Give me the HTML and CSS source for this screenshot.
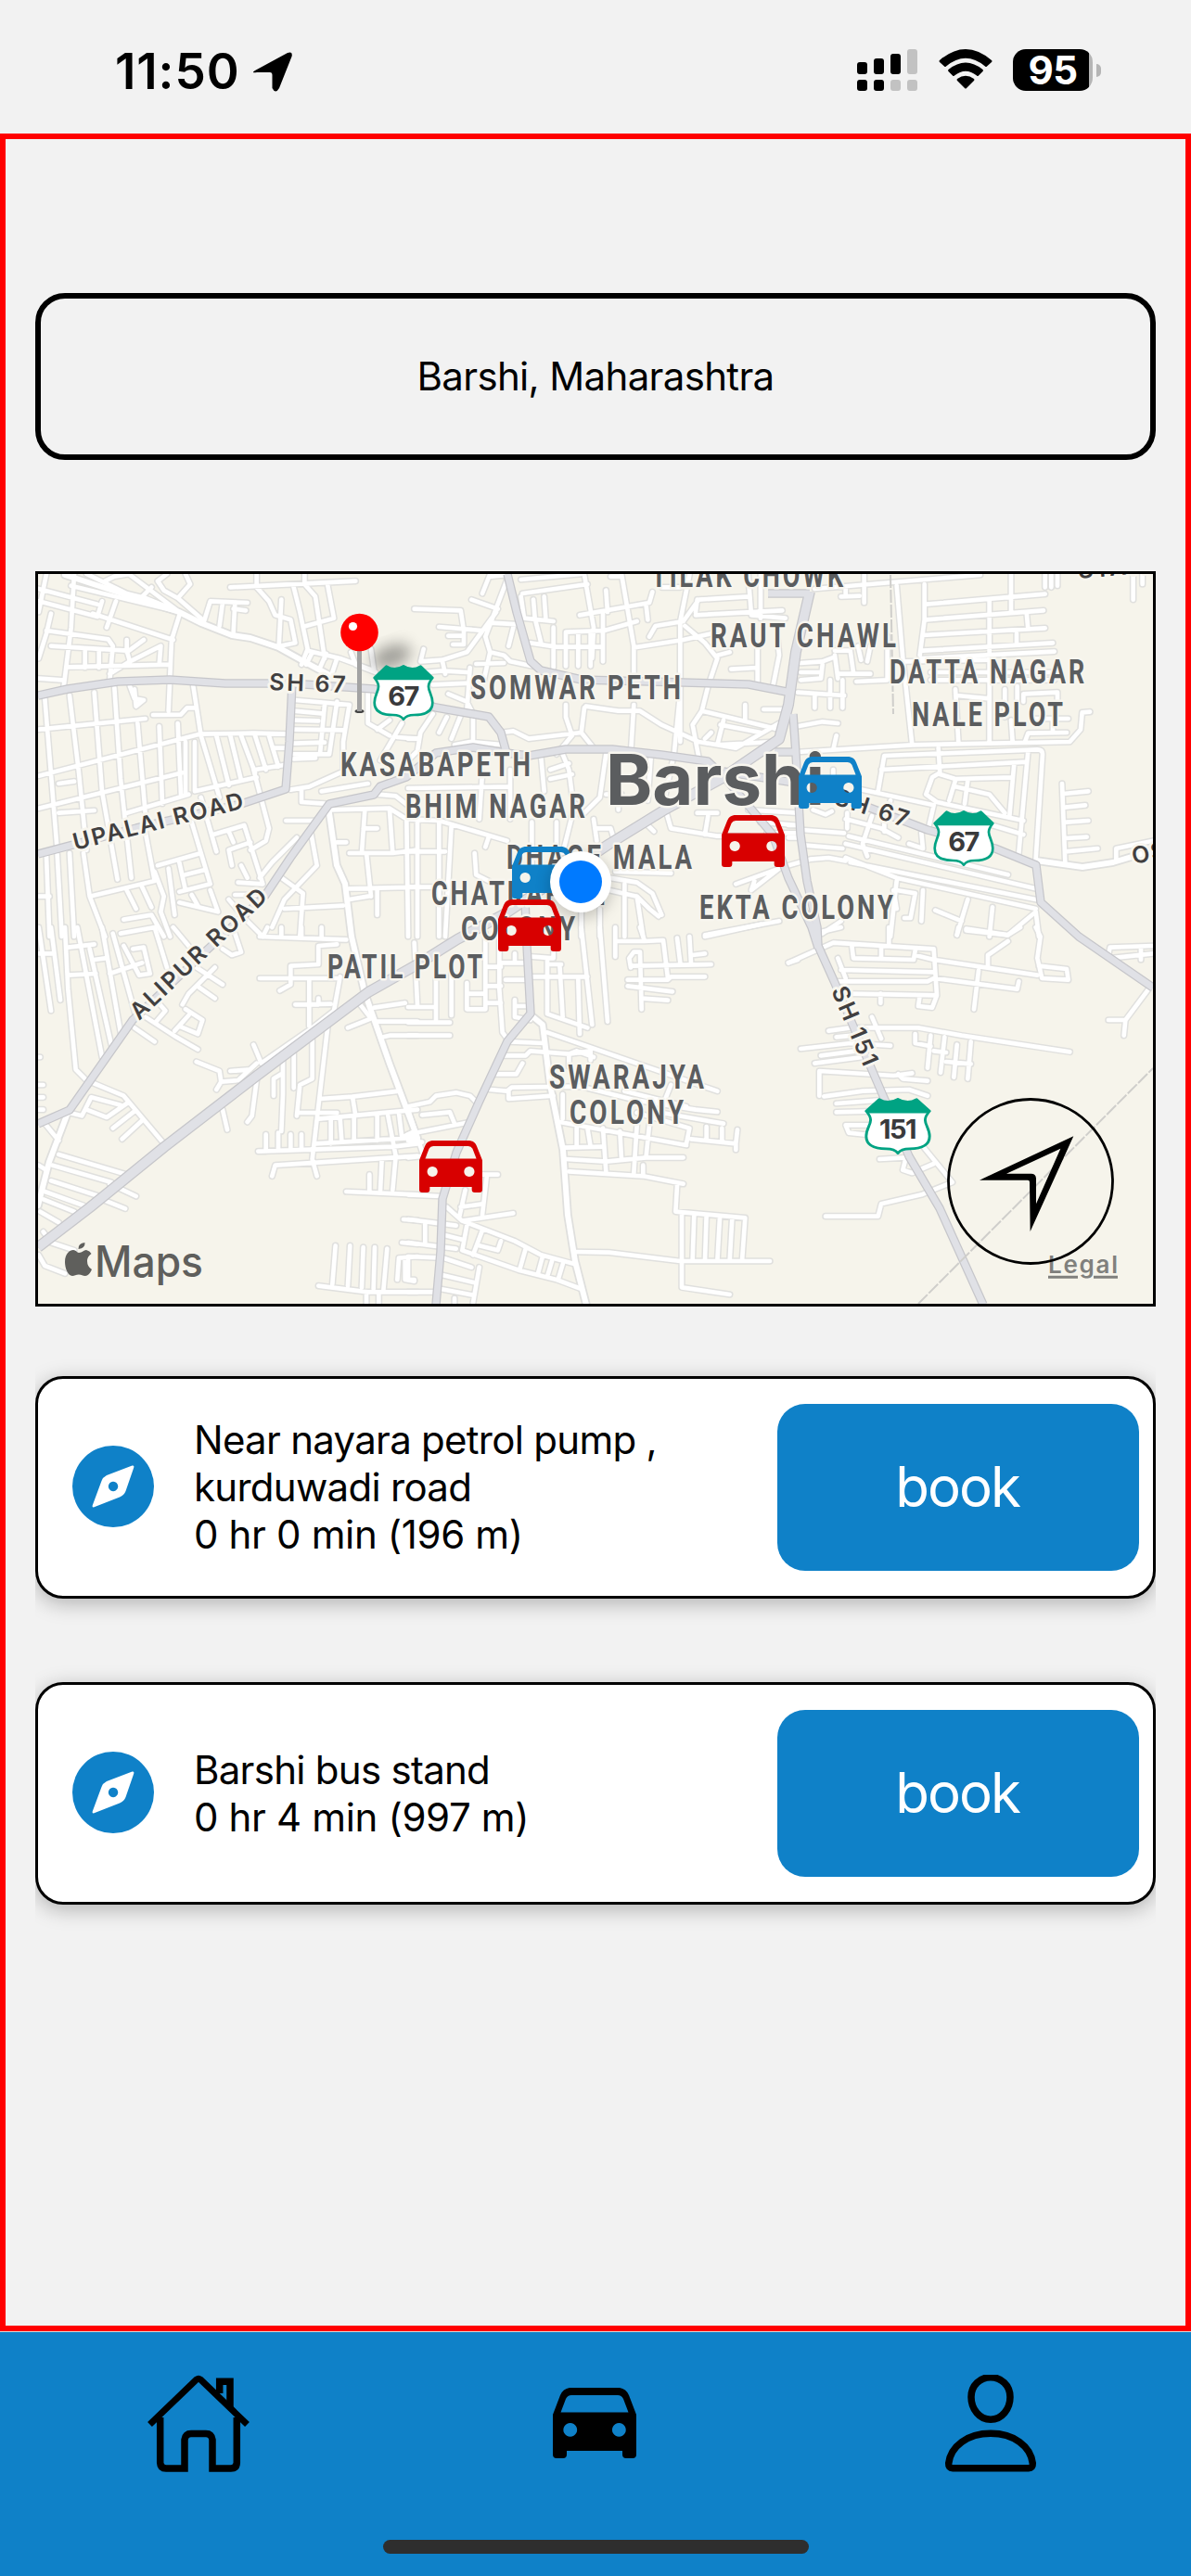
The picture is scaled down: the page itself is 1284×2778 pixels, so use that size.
FILE: index.html
```html
<!DOCTYPE html>
<html lang="en">
<head>
<meta charset="utf-8">
<title>Book a ride</title>
<link rel="stylesheet" href="styles.css">
</head>
<body>
<svg class="defs" width="0" height="0" aria-hidden="true">
  <defs>
    <symbol id="car" viewBox="0 0 90 76" preserveAspectRatio="none">
      <path fill-rule="evenodd" d="M18 0H72Q79 1 82 8L90 29V72Q90 76 86 76H79Q75 76 75 72V68H15V72Q15 76 11 76H4Q0 76 0 72V29L8 8Q11 1 18 0ZM20 8Q16 8 14 12L8.500 26.500H81.500L76 12Q74 8 70 8ZM18.700 38a7.400 7.400 0 1 0 .1 0ZM71.300 38a7.400 7.400 0 1 0 .1 0Z"/>
    </symbol>
    <symbol id="compass" viewBox="0 0 88 88">
      <circle cx="44" cy="44" r="44" fill="#0f81c8"/>
      <path fill="#fff" fill-rule="evenodd" d="M64.500 21.500Q67 21 66.300 23.500L57.500 49Q56 53 51 55.500L23.500 66.300Q21 67 21.700 64.500L31.500 38Q33 34 37 32ZM44 38.800a5.200 5.200 0 1 0 .1 0Z"/>
    </symbol>
    <symbol id="shield" viewBox="0 0 196 180" preserveAspectRatio="none">
      <path class="shield-body" d="M5 42L43 5Q70 22 98 4Q126 22 153 5L191 42Q178 58 178 70C178 86 191 100 191 122C191 150 168 162 132 162Q108 162 98 176Q88 162 64 162C28 162 5 150 5 122C5 100 18 86 18 70Q18 58 5 42Z"/>
      <path class="shield-top" d="M5 42L43 5Q70 22 98 4Q126 22 153 5L191 42L183 49H13Z"/>
    </symbol>

    <g id="streets">
      <path transform="translate(30 600) scale(.33333)" d="M60 57L35 180M150 57L140 230L115 430M35 105L225 155M35 145L225 195L240 145M140 95L470 175M285 145L255 230M210 185L470 270M190 57L320 120L380 135L480 175M250 80L280 65L330 57M330 60L490 180M370 130L400 100M450 57L420 80L440 110L485 135L525 90L510 57M485 135L560 200M490 190L465 270L455 500M75 185L60 250L35 330M60 240L260 268L275 290L265 400M75 290L320 305L330 340L265 380M320 270V310L375 270M330 340L430 290L425 350M130 358L460 350M185 300V360M230 305V360M35 395L110 400M655 100L1060 80M740 57V100L780 145L800 190L850 205L865 280L815 290M820 140L812 290M895 57V90L930 130L960 330M860 100L880 180L905 300L885 350M970 95L990 200L900 225M570 210L590 145L710 150M630 150L620 225M670 150L665 245M665 170L705 175M905 305L1010 330L1120 370M920 310L900 350M965 315L945 360M1000 330L985 375M1045 310L1060 350L1125 375M1110 300L1120 370
      M55 460L95 950M135 450L165 700L190 950M215 440L240 760L290 1045M280 425L300 720L335 1040M35 560L380 525M35 710L555 575L730 572L840 575M35 815L500 700M100 830L215 822M100 735L150 728M320 830L520 770M355 540L380 830M425 550L435 800M485 540L495 770M330 420L345 460L375 465L350 485L345 430M405 513L495 512L515 490L545 490M535 420L560 580L620 780M540 600V760L740 715M510 600V770M610 580L650 740M655 580L690 725M690 580L735 700M735 580L770 690M780 580L810 680M735 690L830 675M800 620L835 620M730 690L780 880L770 920L720 950M865 465L1040 480L1020 600V690M860 500L950 508M860 530L940 532M860 560L1020 562M860 605L960 602M860 640L975 640L1000 470M960 480L945 640M860 655L930 652M1100 440V540L1170 580M1195 585L1260 590M1130 560L1170 530M1210 540L1140 660M850 755L910 745L1010 700M885 750V795L960 800M950 760L1100 735M835 855L925 855M870 910L790 990L750 1040M915 890L935 1000L830 1110L790 1200M820 1040L890 1090L880 1230M980 820L1170 815L1225 850L1230 1230M1090 820L1080 960M1000 925H1030M1085 880H1130M1170 820L1180 960L1040 960M1040 1075L1260 1070M1095 960L1110 1100M1180 960L1260 950M1130 1080V1160M1130 770L1190 775L1260 830M830 1140L1020 1130M1100 1100L1040 1110
      M60 970L70 1230M95 965L110 1230M135 960L150 1230M180 960L200 1100L250 1230M200 1100L410 1050L380 890M410 1020L440 1100L430 1150L460 1230M420 1000L560 960L590 1060L490 1085M490 990L510 1080M510 1030L570 1015M530 860L560 960M560 780L610 955M600 900L700 870L760 1060L680 1055M650 890L665 925M720 925L650 950L660 1000M690 1000L710 1040M320 1080L350 1140M370 1070L400 1135M455 1010L475 1160M530 1095L550 1130M590 1080L615 1150L490 1120M310 1175L400 1160L440 1230M670 1095L740 1095M35 1100H70M650 1110L700 1170L760 1230"/>
      <path transform="translate(30 1000) scale(.33333)" d="M35 0L75 270M75 0L105 235M120 0L130 200L155 460L190 495L310 545L440 700M160 0L240 420M200 70L270 380M240 0L300 340M275 20L350 290M35 85H85M130 65L215 55M130 155L220 150M215 105L250 100M265 150L370 115M300 20L410 0M340 70L375 65L395 150L360 155L310 60M410 0L450 130M470 0L520 60M630 70L660 90L690 80L670 20M545 130L630 185M605 130L520 215L500 250M555 195L605 230M510 265L565 300L550 345L490 320M475 335L520 285M380 290L480 355L550 395M345 325L410 370M410 230L445 270L415 305M545 435L620 465L625 500L610 525M625 500L680 495L740 440M655 465L720 460M730 380L755 440L920 325L990 270L1010 160M630 590L645 655M740 495L725 610L710 630M825 425V540L820 660M795 545V490L820 475M860 410V520M920 365V490L880 510L870 610M970 320L920 750L935 805M750 165H1000M815 205L850 185V125L940 120V60L1000 55M910 170V320M865 250L980 248M940 230V250M750 30L1030 40M775 0L760 30M820 0V30M885 0V30M950 0V30M1035 325L1110 295L1075 250M1120 260L1220 245M1130 305H1260M1150 355L1170 350H1260M945 555L1050 548L1200 530M1050 548L1060 610M880 600H1000M940 620L1260 590M930 700L1260 680M745 725L1180 710L1260 700M790 805L800 770L1260 740M770 670V725M810 665V720M850 670V720M885 670V715M980 620V700M1010 620L1015 690M1055 610V690M1130 610V690M1165 610L1190 740L1180 850M1200 600L1210 680L1250 660M1145 750L1140 850M1105 800V855M1030 855L1260 865M1215 945L1260 948M1210 1020L1260 1025M995 1030L985 1155M1042 1030L1035 1160M1085 1035L1080 1165M1122 1035L1118 1170M1162 1040L1150 1175M940 1160L1100 1180H1260M1095 1180V1220M1135 1180V1220M1195 1140L1200 1070L1260 1065M1220 1070V1140L1250 1145
      M55 635L100 690M135 600L175 610L205 550L300 575M190 590L255 615L320 570M345 595L275 650M370 625L305 685M100 735L320 800M80 770L270 825M75 820L230 870M55 855L180 900M50 880L150 920M40 920L100 955M265 830L350 870M240 880L315 910M50 985L75 1020L150 1045M35 1060L55 1095L120 1120M35 420H40M35 510H50M35 550H50M35 590H50M35 770L60 785"/>
      <path transform="translate(440 600) scale(.33333)" d="M20 170L170 175L180 240M265 57L240 120M270 65L320 60M320 75L250 260L265 310L245 400M205 140L290 170M100 228L240 240M130 257H175M145 285H180V240M265 215L360 220M340 230L325 290M285 180L190 310L110 335L40 340L50 300M110 335L120 380M265 310L310 320L330 340L400 355M220 348L310 345M365 75L560 57M370 120L580 90M365 130L375 200L470 210M405 140L410 200L430 280M440 130L445 200M570 60L600 230L595 330M395 280L480 293H630M470 230V360M510 355V245L635 240L740 210M550 245V355M590 245V355M630 180V340M555 190L780 150L790 115M640 110L645 180M655 65H690V57L730 290V400M770 160L775 205M730 295L890 270L980 250M780 260L800 225L890 210M910 60L880 210V600M890 210L940 140L1100 130M930 190L1210 175M1100 60L1110 190L1220 200M1140 60V200M820 100H880M895 225L960 280L1000 330L970 420L950 500L920 545L940 650M1000 320L1040 310M1045 365L1130 360M1130 300V420M1195 270L1200 320L1180 420M935 140L930 180
      M510 480V520L530 580L480 640M570 490L560 570L600 620M575 485L680 500H750L820 545L940 600M300 570L340 565L390 590L560 570M730 480L720 640M880 440L860 640L830 780M950 500L1200 560M1090 480V530M1150 495H1230M1020 530L1000 610L1180 600M1010 545L1140 570M940 600L1060 620L1200 540M960 590L980 570M0 380L110 370L190 375M80 415L200 410M130 445L190 470L210 510V610M170 515L140 590M125 520L100 570M150 610L200 600L310 610M80 510L40 570L30 630L0 660M0 590H30M200 360L190 500M430 650L440 760M500 640L520 690L530 770M460 690L520 670M460 720L530 705M330 690V850M240 700L230 850M0 750L330 745M640 640L620 780L560 840M640 770H690M785 650L775 790M680 800V820M540 800L500 960M400 860V1000M0 850L100 855L320 920M30 860V1230M100 860V1230M140 870L120 1230M0 955H120M0 1070H130M260 910L250 940M215 960L220 1030L260 1050M480 860V930M600 850L610 920M655 880L670 930M610 880H655M830 810L850 880L1000 905H1100M775 870L795 890M970 840L960 900M935 830H1000M1100 820L1260 830M1140 860L1260 870M1160 895H1260M650 1040L740 1055L790 1090L820 1160M670 1020L850 1025M650 1080L740 1100L760 1230M700 1060V1230M560 1150V1230M620 1140V1230M960 1225L1200 1180M1060 1060L1200 1010L1110 1080L1120 1050M740 1100L780 1140L810 1165"/>
      <path transform="translate(850 600) scale(.33333)" d="M85 105L620 60M245 60V150M170 130L230 128M185 100V130M350 95L370 330L400 610M440 90V205L425 320M445 155L830 122M445 205L825 175M435 255L830 232M435 305L855 280M430 330L860 308M720 57V180M650 140V600M770 180L775 235M738 250V285M830 57V100M850 57V100M870 57V95M1115 57V140M1145 57V90M150 320L160 395M40 345L110 340L150 325M40 375H105M40 400L105 395L110 350M150 305H200L210 375M160 380H265M225 290L235 335M265 290L255 340M320 260V400L220 405M30 440L180 450M85 450V490M135 400V490M175 400V490M30 550L110 535L160 540M155 580L145 625M30 633L400 610L910 600L945 560L950 505L975 503M540 430L550 605M545 450L650 460M700 430V520M740 420V470M760 470V445L870 440V470M720 530L725 600M790 525H905M765 600L775 572L900 570M855 530V570M380 340L640 335M460 375H860M460 400H860
      M290 760L310 645L805 625Q822 625 822 640L800 980M300 690L770 665M485 620L490 700M775 630L745 960M730 670L715 840M490 700L465 715L445 770L480 795L760 855M490 705L540 720L720 715M540 725L520 790M580 725L570 800M540 745L650 770L700 830M240 755L470 805L455 870M330 790L320 830M145 690V770M885 735L895 990M890 768L970 760M895 812L960 805M900 860L970 855M895 912L965 908M895 955L1000 945M1060 985V945L1180 920M45 885L180 895M0 870H30M0 910H30M55 935L175 945M190 830V880M185 850L300 880L355 910M270 840L240 930L255 970M195 905L710 1030M430 895L435 945L390 930M310 850V890M185 930L800 1075M185 975L350 1040L800 1140M200 990L800 1110M0 1000L70 980L130 975L185 985M660 870L760 900M80 820L120 835L140 825M350 1050L330 1230M350 1080L410 1090L395 1170H375M435 1080L430 1180M580 1110L545 1225M475 1145L560 1180M660 1135L650 1230M575 1210L710 1225L800 1150L810 1230M170 1180L110 1220M340 1080L350 1140"/>
      <path transform="translate(440 1000) scale(.33333)" d="M20 50L30 250M0 258H85M90 170V300M140 150V285M0 308H135M0 350H135M190 180V265H250V20M195 215H250M250 245H300M250 128H300M255 190H300M295 0V200L305 340L320 360M345 85V115M300 115H380M315 170H380M345 235V290L395 300M350 255H390M400 160H580M400 95L470 100V80M450 100V280L580 325M490 120L500 290M450 120H495M550 170L555 345M560 0L595 315M620 0L645 305M450 340L1000 530M330 370L440 375M310 415H380L395 400L520 410L590 400V430M280 475H350L370 440M265 525L320 530L335 518L560 515M325 530V555L470 545M520 450V410L545 400L600 420M0 580L70 565L90 545L155 535L200 545L225 570M45 607L135 598L150 635M0 670L190 632M0 590L50 740M0 690L45 695M0 745L50 740M500 540V620M490 630L900 705M560 515L740 560L930 590L1000 597M700 530L900 580M820 600L1020 635M740 600L910 650L900 700M545 640V710M580 650L590 710M630 650L640 790M685 660L690 750M740 640L730 795M780 640L770 740M505 713L625 710M510 750L640 758L770 745H890M520 790L760 805L890 830M870 835L865 920L1090 940L1080 1080M965 645V690M1015 650V690M915 685L1060 700L1065 655M1060 700V720M850 510L830 560M760 770V805M540 1050L650 1052L880 1080H1170M885 930V1165L1040 1188M925 930L920 1075M965 930L960 1078M1008 940L1000 1080M1048 940L1040 1080
      M670 0V95M750 0L765 45L825 42L840 165M670 45H760M720 130L715 100L730 80H750L755 265M720 125L980 120M870 35L880 115M910 30L915 115M920 90L960 85M710 170H840L850 160H960M710 190L855 208M755 230L840 236M960 30L1140 -10M1230 115L1260 105M240 800H290M255 800L240 930M185 850L165 940M170 905L240 895M175 950L340 925M125 905L175 950L345 1015L430 1060L540 1090M190 965L175 1045L360 1110L480 1140L560 1170M240 980L210 1060M300 1015L290 1045L230 1030M380 1040L360 1110M435 1065L420 1120M465 1080L450 1130M500 1090L485 1140M0 865L105 870M0 945L155 965M55 960V1020M0 1020L155 1040M0 1065L115 1070L205 1100M115 995L175 1010M110 1125L215 1150M105 1170L210 1190M230 1100L210 1215M0 1180H85M0 1140H20M0 1065V1140M150 1200V1215"/>
      <path transform="translate(850 1000) scale(.33333)" d="M0 115L145 50L470 70L480 220L465 260L420 255L425 220M205 60L210 100L405 105L410 75M300 60V100M325 0V55M410 90L470 105L805 155M160 100L185 165M170 138L470 145M160 175H450L470 165L740 200L745 175M200 215L480 220M298 215V245M600 265L615 140M645 130V90L710 45M545 25L550 0M575 5L710 25L750 0M800 0L815 30L805 100L820 165L905 170L900 135L810 125M1035 90L1040 65L1180 60M1040 100L1180 85M1140 70V105M1165 200L1090 300H1035M1090 300L1085 350M105 15L170 0M130 335L200 325H420L560 350L910 403M155 355L210 350M40 393L200 375L330 383M270 290L300 360M105 415L220 400M85 440L240 420M100 545V465L340 480L400 472M355 475L370 490L450 497M115 547L240 530L390 525L450 545M155 570L290 560M155 598L280 595M260 640L185 640L195 665L260 672M410 345V375L460 385M460 350L450 455M505 355L492 470M545 380L535 485M590 370L580 490M470 400L510 405M510 435L590 442M295 750L380 745L370 785L400 795L470 765M440 715L530 825L430 865L300 895L290 935H120"/>
    </g>
    <g id="avenues">
      <path d="M70 620L193 660L217 672L250 685L270 688L300 698L327 713L355 728"/>
      <path d="M354 870L363 933L372 953L379 1010L393 1070L420 1147L450 1227"/>
      <path d="M73 1200L53 1253L41 1300"/>
      <path d="M575 1097L585 1105L593 1170L607 1240L612 1310L620 1360L632 1407"/>
      <path d="M1117 928L1167 935L1200 930L1243 917"/>
    </g>
    <g id="highways">
      <path d="M41 750L73 743L127 735L183 733L243 737H313L403 743L470 763L510 770L527 773L540 790L546 812"/>
      <path d="M285 967L313 925L355 867L403 857L410 848L438 838L470 812L510 806L546 812L570 815L610 808H660L713 814L763 821L780 837"/>
      <path d="M41 921L147 893L260 867L308 851L312 800L315 737"/>
      <path d="M285 967L215 1032L143 1100L75 1197L41 1212"/>
      <path d="M780 837L833 900L850 947L875 1000L882 1022"/>
      <path d="M547 619L557 660L572 713L583 723L627 733L807 738L853 747"/>
      <path d="M828 640H873M835 811H858"/>
      <path d="M780 832L850 843L927 867L1000 895L1073 915L1117 933L1122 973L1163 1010L1243 1065"/>
      <path d="M566 970L568 1020L572 1093L547 1123L517 1187L492 1243L477 1293L475 1350L470 1407"/>
      <path d="M855 770L858 813L863 900L870 950L881 1000L882 1020L900 1060L950 1177L980 1247L1013 1303L1060 1407"/>
    </g>
    <path id="trunk" d="M41 1345L97 1302L177 1237L277 1160L397 1070L450 1040L493 1013L545 985L657 910L717 873L777 840L840 797L850 760L858 703L873 638"/>
    <filter id="soft" x="-50%" y="-50%" width="200%" height="200%"><feGaussianBlur stdDeviation="8"/></filter>
  </defs>
</svg>

<div class="screen">
  <header class="status">
    <div class="status-left">
      <span class="clock">11:50</span>
      <svg class="location" viewBox="0 0 42 43"><path d="M2 20L37 1Q43-1 41.500 5L28 39Q24 46 20.500 39V25Q20.500 22 18 22H4Q-3 23 2 20Z"/></svg>
    </div>
    <div class="status-right">
      <svg class="signal" viewBox="0 0 66 45">
        <rect x="0" y="14" width="11" height="13" rx="3"/><rect x="18" y="10" width="11" height="17" rx="3"/><rect x="36" y="5" width="11" height="22" rx="3"/><rect class="faint" x="54" y="0" width="11" height="27" rx="3"/>
        <rect x="0" y="33" width="11" height="12" rx="3"/><rect x="18" y="33" width="11" height="12" rx="3"/><rect class="faint" x="36" y="33" width="11" height="12" rx="3"/><rect class="faint" x="54" y="33" width="11" height="12" rx="3"/>
      </svg>
      <svg class="wifi" viewBox="0 0 58 43">
        <path d="M1 12Q29-12 57 12Q58 13 57 14L52 18.500Q51 19.500 50 18.500Q29 1 8 18.500Q7 19.500 6 18.500L1 14Q0 13 1 12Z"/>
        <path d="M10.500 22Q29 7 47.500 22Q48.500 23 47.500 24L43 28.500Q42 29.500 41 28.500Q29 19 17 28.500Q16 29.500 15 28.500L10.500 24Q9.500 23 10.500 22Z"/>
        <path d="M20 32Q29 25.500 38 32Q39 33 38 34L30 42Q29 43 28 42L20 34Q19 33 20 32Z"/>
      </svg>
      <div class="battery"><div class="charge">95</div><span class="nub"></span></div>
    </div>
  </header>

  <main class="content">
    <div class="place">Barshi, Maharashtra</div>

    <svg class="map" viewBox="41 619 1202 787">
      <use href="#streets" class="street-edge"/>
      <use href="#avenues" class="avenue-edge"/>
      <use href="#streets" class="street"/>
      <use href="#avenues" class="avenue"/>
      <use href="#highways" class="highway-edge"/>
      <use href="#trunk" class="trunk-edge"/>
      <use href="#highways" class="highway"/>
      <use href="#trunk" class="trunk"/>
      <path class="rail" d="M990 1406L1243 1152M960 620L963 770"/>

      <g class="area">
        <text x="702" y="633" textLength="210" lengthAdjust="spacingAndGlyphs">TILAK CHOWK</text>
        <text x="766" y="698" textLength="203" lengthAdjust="spacingAndGlyphs">RAUT CHAWL</text>
        <text x="959" y="737" textLength="213" lengthAdjust="spacingAndGlyphs">DATTA NAGAR</text>
        <text x="983" y="783" textLength="166" lengthAdjust="spacingAndGlyphs">NALE PLOT</text>
        <text x="507" y="754" textLength="230" lengthAdjust="spacingAndGlyphs">SOMWAR PETH</text>
        <text x="367" y="837" textLength="208" lengthAdjust="spacingAndGlyphs">KASABAPETH</text>
        <text x="437" y="882" textLength="197" lengthAdjust="spacingAndGlyphs">BHIM NAGAR</text>
        <text x="546" y="937" textLength="203" lengthAdjust="spacingAndGlyphs">DHAGE MALA</text>
        <text x="465" y="976" textLength="191" lengthAdjust="spacingAndGlyphs">CHATRAPATI</text>
        <text x="497" y="1014" textLength="126" lengthAdjust="spacingAndGlyphs">COLONY</text>
        <text x="353" y="1055" textLength="170" lengthAdjust="spacingAndGlyphs">PATIL PLOT</text>
        <text x="754" y="991" textLength="212" lengthAdjust="spacingAndGlyphs">EKTA COLONY</text>
        <text x="592" y="1174" textLength="170" lengthAdjust="spacingAndGlyphs">SWARAJYA</text>
        <text x="614" y="1212" textLength="126" lengthAdjust="spacingAndGlyphs">COLONY</text>
      </g>
      <text class="city" x="653" y="868" textLength="236" lengthAdjust="spacingAndGlyphs">Barshi</text>
      <g class="road-name">
        <text x="290" y="744" transform="rotate(2 290 744)" textLength="84">SH 67</text>
        <text x="81" y="917" transform="rotate(-14 81 917)" textLength="190">UPALAI ROAD</text>
        <text x="150" y="1101" transform="rotate(-43.500 150 1101)" textLength="194">ALIPUR ROAD</text>
        <text x="898" y="867" transform="rotate(18 898 867)" textLength="84">SH 67</text>
        <text x="896" y="1068" transform="rotate(67 896 1068)" textLength="92">SH 151</text>
        <text x="1222" y="932" transform="rotate(-11 1222 932)">OSMANABAD</text>
        <text x="1163" y="624" transform="rotate(-5 1163 624)">STATION</text>
      </g>

      <ellipse class="pin-shadow" cx="422" cy="708" rx="22" ry="12" transform="rotate(-20 422 708)"/>
      <use href="#shield" x="402" y="717" width="66" height="60"/>
      <use href="#shield" x="1006" y="874" width="66" height="60"/>
      <use href="#shield" x="932" y="1184" width="72" height="61"/>
      <g class="route">
        <text x="434.500" y="761">67</text>
        <text x="1038.500" y="918">67</text>
        <text x="967.500" y="1228">151</text>
      </g>

      <ellipse class="pin-foot" cx="387.500" cy="767" rx="5" ry="2"/>
      <rect class="pin-stem" x="385" y="700" width="5" height="67"/>
      <circle class="pin-head" cx="387.500" cy="682" r="20.300"/>
      <circle fill="#fff" cx="380.500" cy="675.500" r="4.600"/>

      <use href="#car" class="taxi-blue" x="861" y="816" width="68" height="56"/>
      <use href="#car" class="taxi-red" x="778" y="879" width="68" height="56"/>
      <use href="#car" class="taxi-blue" x="552" y="913" width="68" height="56"/>
      <circle class="dot-shadow" cx="626" cy="956" r="34"/>
      <use href="#car" class="taxi-red" x="537" y="970" width="68" height="56"/>
      <use href="#car" class="taxi-red" x="452" y="1230" width="68" height="56"/>
      <circle fill="#fff" cx="626" cy="951" r="33"/>
      <circle fill="#007aff" cx="626" cy="951" r="23"/>

      <path class="brand" d="M85 1351C89 1351 90 1348 93 1348Q97 1349 98.500 1352Q94 1355 94 1360Q94 1366 99 1369Q96 1376 92 1376C89 1376 88 1374.500 85 1374.500S80 1376 78 1376C73 1376 70 1367 70 1361C70 1352 75 1348 79 1348C82 1348 83 1351 85 1351ZM84.500 1347Q84 1341 91.500 1340Q92 1346 84.500 1347Z"/>
      <text class="brand-name" x="102" y="1377" textLength="117" lengthAdjust="spacingAndGlyphs">Maps</text>
      <text class="legal" x="1130" y="1373" textLength="75">Legal</text>
      <path class="legal-line" d="M1130 1377.300H1162M1179 1377.300H1205"/>
      <circle class="locate-ring" cx="1111" cy="1274" r="88.500"/>
      <path transform="translate(850 1000) scale(.33333)" fill-rule="evenodd" d="M922 676L782 984L780 824Q780 818 774 818H618ZM880 716L705 797H785Q800 797 801 812V895Z"/>
    </svg>

    <section class="rides">
      <article class="ride">
        <svg class="ride-icon"><use href="#compass"/></svg>
        <div class="ride-text"><p class="place-name">Near nayara petrol pump ,</p><p class="place-name">kurduwadi road</p><p class="trip">0 hr 0 min (196 m)</p></div>
        <button class="book">book</button>
      </article>
      <article class="ride">
        <svg class="ride-icon"><use href="#compass"/></svg>
        <div class="ride-text"><p class="place-name">Barshi bus stand</p><p class="trip">0 hr 4 min (997 m)</p></div>
        <button class="book">book</button>
      </article>
    </section>
  </main>

  <nav class="tabs">
    <div class="tab-row">
      <svg class="tab" viewBox="0 0 110 110">
        <g fill="none" stroke="#000" stroke-width="7.500">
          <path stroke-width="7" d="M2.500 53.500L53 5Q55 3.500 57 5L107.500 53.500"/>
          <path d="M13.700 46V95Q14 101 20 101H40V70Q41 63.500 47 63.500H63Q69 63.500 70 70V101H90Q96 101 96.300 95V46"/>
          <path d="M77.700 20V7.300H89V36" />
        </g>
      </svg>
      <svg class="tab" viewBox="0 0 110 110"><use href="#car" x="10" y="14" width="90" height="76"/></svg>
      <svg class="tab" viewBox="0 0 110 110">
        <g fill="none" stroke="#000" stroke-width="7.500">
          <path d="M55 2.700C66 2.700 76 11 76 24C76 37 67 48.300 55 48.300S34 37 34 24C34 11 44 2.700 55 2.700Z"/>
          <path d="M9.700 95.500C12 77 30 63.300 55 63.300S98 77 100.300 95.500Q100.500 100.700 96 100.700H14Q9.500 100.700 9.700 95.500Z"/>
        </g>
      </svg>
    </div>
    <div class="home-bar"></div>
  </nav>
</div>
</body>
</html>
```
FILE: styles.css
```css
* { box-sizing: border-box; }
body { margin: 0; background: #f2f2f2; font-family: Inter, "Liberation Sans", sans-serif; color: #000; }
.defs { display: block; }
.screen { width: 1284px; height: 2778px; display: flex; flex-direction: column; overflow: hidden; background: #f2f2f2; }

.status { height: 144px; display: flex; justify-content: space-between; align-items: flex-start; padding: 0 97px 0 124px; }
.status-left { display: flex; gap: 15px; padding-top: 45px; }
.clock { width: 134px; font-size: 53px; line-height: 64px; font-weight: 600; letter-spacing: .9px; white-space: nowrap; }
.location { width: 42px; height: 43px; margin-top: 11px; }
.status-right { display: flex; gap: 22px; padding-top: 53px; }
.signal { width: 66px; height: 45px; }
.faint { fill: #c2c2c2; }
.wifi { width: 58px; height: 43px; }
.battery { display: flex; align-items: center; gap: 4px; height: 45px; }
.charge { width: 86px; height: 45px; border-radius: 14px; background: linear-gradient(90deg, #000 82px, #b5b5b5 82px); color: #fff; font-size: 42px; line-height: 45px; font-weight: 700; text-align: center; letter-spacing: -.5px; }
.nub { width: 5px; height: 14px; border-radius: 0 6px 6px 0; background: #b5b5b5; }

.content { height: 2370px; border: 6px solid #f00; padding: 166px 32px 0; display: flex; flex-direction: column; }
.place { height: 180px; border: 6px solid #000; border-radius: 32px; display: flex; align-items: center; justify-content: center; font-size: 42px; letter-spacing: -.65px; padding-bottom: 2px; }
.map { display: block; width: 100%; height: 793px; margin-top: 120px; border: 3px solid #000; background: #f6f4eb; overflow: hidden; }
.map use { stroke-linejoin: round; }
.street, .street-edge, .avenue, .avenue-edge { fill: none; stroke-linecap: round; }
.street-edge { stroke: #e0e0de; stroke-width: 23px; }
.street { stroke: #fff; stroke-width: 14px; }
.avenue-edge { stroke: #dfdfdd; stroke-width: 9.500px; }
.avenue { stroke: #fff; stroke-width: 6px; }
.highway, .highway-edge, .trunk, .trunk-edge { fill: none; }
.highway-edge { stroke: #c6c6ca; stroke-width: 9.500px; }
.highway { stroke: #e0e1e6; stroke-width: 7px; }
.trunk-edge { stroke: #c6c6ca; stroke-width: 12px; }
.trunk { stroke: #e0e1e6; stroke-width: 9.500px; }
.rail { fill: none; stroke: #cfcecb; stroke-width: 2px; stroke-dasharray: 14 2; }
.map text { paint-order: stroke; stroke: #f8f6ef; stroke-linejoin: round; }
.area text { font: 700 36.500px Roboto, sans-serif; letter-spacing: 4px; fill: #5b5d5f; stroke-width: 5px; }
.map .city { font-size: 76px; font-weight: 650; fill: #5b5d5f; stroke-width: 5px; }
.road-name text { font-size: 25px; font-weight: 600; letter-spacing: 1.500px; fill: #413f40; stroke-width: 6px; }
.route text { font-size: 29px; font-weight: 700; fill: #3a3a3c; text-anchor: middle; stroke: none; letter-spacing: -1.500px; }
.shield-body { fill: #fff; stroke: #00a383; stroke-width: 8px; }
.shield-top { fill: #00a383; }
.pin-shadow { fill: #000; opacity: .35; filter: url(#soft); }
.pin-foot { fill: #444; }
.pin-stem { fill: #a3a3a3; }
.pin-head { fill: #f00; }
.taxi-blue { fill: #0f81c8; }
.taxi-red { fill: #d80000; }
.dot-shadow { fill: #000; opacity: .2; filter: url(#soft); }
.brand { fill: #5f5f5c; }
.map .brand-name { font-size: 46px; font-weight: 500; fill: #5f5f5c; stroke: none; }
.map .legal { font-size: 26px; font-weight: 600; fill: #80807d; stroke: none; }
.legal-line { stroke: #80807d; stroke-width: 3px; }
.locate-ring { fill: none; stroke: #000; stroke-width: 2.800px; }

.rides { margin-top: 75px; display: flex; flex-direction: column; gap: 90px; overflow-x: clip; overflow-y: visible; }
.ride { height: 240px; display: flex; align-items: center; padding: 0 15px 0 37px; background: #fff; border: 3px solid #000; border-radius: 30px; box-shadow: 0 5px 22px rgba(0, 0, 0, .27); }
.ride-icon { width: 88px; height: 88px; flex: none; margin: -3px 43px 0 0; }
.ride-text { flex: 1; font-size: 42px; line-height: 50.700px; padding-top: 1px; }
.ride-text p { margin: 0; white-space: nowrap; }
.place-name { letter-spacing: -.72px; }
.trip { letter-spacing: -.35px; }
.book { width: 390px; height: 180px; border: 0; border-radius: 30px; background: #0f81c8; color: #fff; font: 400 60px Inter, sans-serif; letter-spacing: -2px; padding: 0 2px 2px 0; }

.tabs { margin-top: 1px; flex: 1; background: #0f81c8; display: flex; flex-direction: column; align-items: center; box-shadow: 0 -1px #d8d8d8; }
.tab-row { width: 100%; display: flex; justify-content: space-around; padding: 46px 2px 0 0; }
.tab { width: 110px; height: 110px; }
.home-bar { width: 459px; height: 15px; border-radius: 8px; background: #2e2e2e; margin-top: 68px; }
```
